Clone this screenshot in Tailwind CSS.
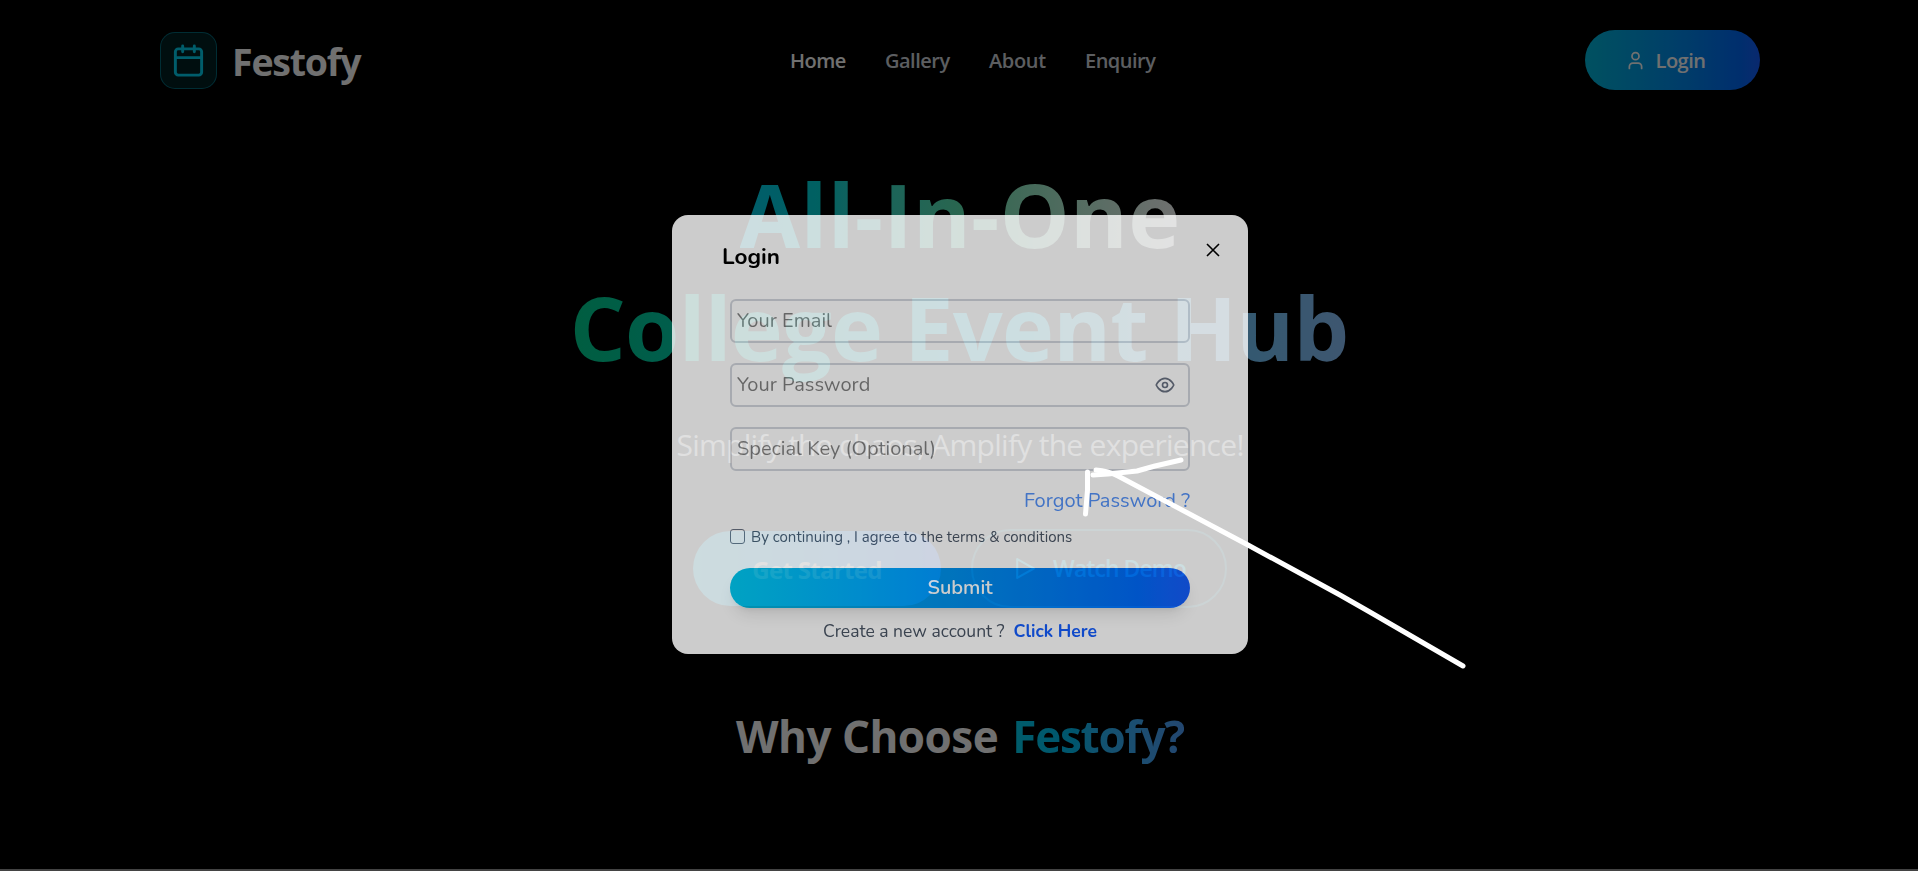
<!DOCTYPE html>
<html lang="en">
<head>
<meta charset="utf-8">
<title>Festofy</title>
<script src="https://cdn.jsdelivr.net/npm/@tailwindcss/browser@4"></script>
</head>
<body class="bg-black overflow-hidden">
<div class="relative w-[1920px] h-[871px] overflow-hidden bg-black font-['Open_Sans','Noto_Sans',sans-serif] text-white">
  <header class="flex h-[120px] items-center px-40">
    <div class="flex w-[630px] items-center gap-[15px]">
      <div class="flex size-[57px] items-center justify-center rounded-[15px] border border-cyan-400/40 bg-cyan-400/15 text-cyan-400">
        <svg class="size-[35px]" viewBox="0 0 24 24" fill="none" stroke="currentColor" stroke-width="2" stroke-linecap="round" stroke-linejoin="round"><rect x="3" y="4" width="18" height="18" rx="2"/><path d="M8 2v4M16 2v4M3 10h18"/></svg>
      </div>
      <span class="pt-[3px] text-[37.5px] leading-[57px] font-bold tracking-[-1.2px]">Festofy</span>
    </div>
    <nav class="flex w-[795px] pt-[2px] text-[20px] font-semibold tracking-[-0.5px] text-gray-300">
      <a class="w-[95px] text-white">Home</a><a class="w-[104px]">Gallery</a><a class="w-[96px] tracking-[-0.35px]">About</a><a>Enquiry</a>
    </nav>
    <button class="flex h-[60px] w-[175px] items-center justify-center gap-[10px] rounded-full bg-linear-to-r from-cyan-500 to-blue-600 pr-[15px] text-[20px] font-semibold">
      <svg class="size-[21px]" viewBox="0 0 24 24" fill="none" stroke="currentColor" stroke-width="2" stroke-linecap="round" stroke-linejoin="round"><path d="M19 21v-2a4 4 0 0 0-4-4H9a4 4 0 0 0-4 4v2"/><circle cx="12" cy="7" r="4"/></svg>
      <span class="pt-[2px] tracking-[-0.5px]">Login</span>
    </button>
  </header>
  <main class="flex flex-col items-center">
    <h1 class="mt-[38px] flex flex-col items-center text-[88px] leading-[113px] font-bold">
      <span class="bg-linear-to-r from-cyan-400 via-emerald-300 to-white bg-clip-text tracking-[0.3px] text-transparent">All-In-One</span>
      <span class="mr-[2px] bg-linear-to-r from-emerald-400 via-cyan-400 to-blue-300 bg-clip-text tracking-[-0.78px] text-transparent">College Event Hub</span>
    </h1>
    <p class="mt-[38px] text-[30px] leading-[45px] tracking-[-0.72px] text-gray-200">Simplify the chaos, Amplify the experience!</p>
    <div class="mt-[62px] flex items-center gap-[30px] font-bold">
      <button class="flex h-[75px] w-[248px] items-center justify-center rounded-full bg-linear-to-r from-cyan-500 to-blue-600 text-[24px]"><span class="pt-[3px] tracking-[-0.7px]">Get Started</span></button>
      <button class="flex h-[79px] w-[256px] items-center justify-center gap-4 rounded-full border-2 border-cyan-500/50 text-[23px] font-semibold text-cyan-400"><svg class="size-[25px]" viewBox="0 0 24 24" fill="none" stroke="currentColor" stroke-width="2" stroke-linejoin="round"><path d="M5 3l16 9-16 9z"/></svg><span class="tracking-[-0.95px]">Watch Demo</span></button>
    </div>
    <h2 class="mt-[98px] flex gap-[14px] text-[44px] leading-[60px] font-bold"><span class="tracking-[-0.5px]">Why Choose</span><span class="bg-linear-to-r from-cyan-400 to-blue-400 bg-clip-text tracking-[-1.2px] text-transparent">Festofy?</span></h2>
  </main>
  <div class="absolute inset-x-0 bottom-0 h-[2px] bg-white/60"></div>

  <!-- Backdrop and login dialog -->
  <div class="absolute inset-0 bg-black/56"></div>
  <div class="absolute top-[215px] left-[672px] h-[439px] w-[576px] rounded-2xl bg-white px-[50px] opacity-80 font-['Nunito',sans-serif] text-black">
    <div class="flex h-[84px] items-start justify-between pt-[26px]">
      <h3 class="text-[22.5px] leading-[32px] font-bold">Login</h3>
      <svg class="mt-[-1px] mr-[-25px] size-5" viewBox="0 0 20 20" fill="none" stroke="currentColor" stroke-width="1.6"><path d="M4 4l12 12M16 4L4 16"/></svg>
    </div>
    <form class="mx-2 flex flex-col text-[20px] text-black/50">
      <div class="flex h-[44px] items-center rounded-md border-2 border-gray-300 px-[5px]">Your Email</div>
      <div class="mt-5 flex h-[44px] items-center justify-between rounded-md border-2 border-gray-300 pr-[13px] pl-[5px]"><span>Your Password</span>
        <svg class="size-5 text-gray-500" viewBox="0 0 24 24" fill="none" stroke="currentColor" stroke-width="2"><path d="M1.500 12S5 4 12 4s10.500 8 10.500 8S19 20 12 20 1.500 12 1.500 12z"/><circle cx="12" cy="12" r="3"/></svg></div>
      <div class="mt-5 flex h-[44px] items-center rounded-md border-2 border-gray-300 px-[5px]">Special Key (Optional)</div>
      <a class="mt-[15px] self-end leading-[30px] text-[#5491f7]">Forgot Password ?</a>
      <label class="mt-[11px] flex h-[19px] items-center gap-[6px] text-[15px] text-gray-600"><span class="size-[15px] rounded-[3px] border border-gray-500"></span><span class="pt-[1px]">By continuing , I agree to the terms &amp; conditions</span></label>
      <button type="button" class="mt-[22px] flex h-10 items-center justify-center rounded-full bg-linear-to-r from-cyan-500 to-blue-600 font-semibold text-white shadow-lg">Submit</button>
      <p class="mt-[10px] flex justify-center gap-[9px] text-[17.5px] leading-[26px] text-gray-600"><span>Create a new account ?</span><a class="font-bold text-blue-600">Click Here</a></p>
    </form>
  </div>

  <!-- Hand-drawn arrow -->
  <svg class="absolute inset-0 size-full" viewBox="0 0 1920 871" fill="none" stroke="white" stroke-width="5" stroke-linecap="round" stroke-linejoin="round"><path d="M1463 666L1400 629.500Q1370 612 1340 595L1248 545L1118 476Q1108 471 1096 470"/><path d="M1087.500 472L1087.500 490L1085.500 514"/><path d="M1093 475L1108 474L1137 471L1155 466L1181 460"/></svg>
</div>
</body>
</html>
